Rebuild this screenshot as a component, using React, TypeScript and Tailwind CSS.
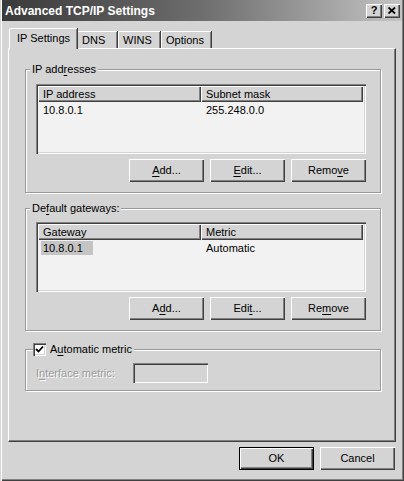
import React from 'react';

const raised = 'shadow-[inset_1px_1px_0_#ffffff,inset_-1px_-1px_0_#404040,inset_-2px_-2px_0_#808080]';
const sunken = 'shadow-[inset_1px_1px_0_#808080,inset_2px_2px_0_#404040,inset_-1px_-1px_0_#ffffff,inset_-2px_-2px_0_#d4d4d4]';

const U: React.FC<{ children: React.ReactNode }> = ({ children }) => (
  <span className="underline underline-offset-[2px] decoration-[1px]">{children}</span>
);

const Btn: React.FC<{ children: React.ReactNode; isDefault?: boolean }> = ({ children, isDefault }) => (
  <div
    className={
      isDefault
        ? 'w-[75px] h-[23px] flex items-center justify-center bg-[#d4d4d4] text-black border border-black shadow-[inset_1px_1px_0_#ffffff,inset_-1px_-1px_0_#404040,inset_-2px_-2px_0_#808080]'
        : 'w-[75px] h-[23px] flex items-center justify-center bg-[#d4d4d4] text-black shadow-[inset_1px_1px_0_#ffffff,inset_-1px_-1px_0_#404040,inset_-2px_-2px_0_#808080]'
    }
  >
    {children}
  </div>
);

type ListProps = {
  cols: [string, string];
  row: [string, string];
  selected?: boolean;
};

const ListView: React.FC<ListProps> = ({ cols, row, selected }) => (
  <div className={`w-[330px] h-[70px] bg-[#f2f2f2] p-[2px] ${sunken}`}>
    <div className="flex h-[16px]">
      <div className={`w-[163px] h-full bg-[#d4d4d4] pl-[5px] flex items-center ${raised}`}>{cols[0]}</div>
      <div className={`w-[162px] h-full bg-[#d4d4d4] pl-[5px] flex items-center ${raised}`}>{cols[1]}</div>
    </div>
    <div className="flex h-[15px] mt-px items-center">
      <div className="w-[163px] pl-[3px]">
        <span className={selected ? 'bg-[#c4c4c4] px-[2px] pr-[10px] py-px' : 'px-[2px]'}>{row[0]}</span>
      </div>
      <div className="pl-[5px]">{row[1]}</div>
    </div>
  </div>
);

const groupBox =
  'w-[356px] border border-[#9a9a9a] shadow-[inset_1px_1px_0_#ffffff,1px_1px_0_#ffffff] pb-[10px]';

export default function App() {
  return (
    <div className="w-[404px] h-[481px] bg-[#d4d4d4] text-[11px] leading-[13px] text-black font-['Liberation_Sans',Arial,sans-serif] flex flex-col shadow-[inset_1px_0_0_#d4d4d4,inset_2px_0_0_#ffffff,inset_-1px_-1px_0_#404040,inset_-2px_-2px_0_#808080] overflow-hidden">
      {/* Title bar */}
      <div className="mx-[2px] h-[21px] flex items-center justify-between bg-gradient-to-r from-[#3a3a3a] via-[#6e6e6e] to-[#c4c4c4]">
        <span className="pl-[3px] pt-[2px] text-white font-bold text-[12px]">Advanced TCP/IP Settings</span>
        <div className="flex gap-[2px] mr-[2px]">
          <div className={`w-[16px] h-[14px] bg-[#d4d4d4] flex items-center justify-center font-bold text-[11px] ${raised}`}>?</div>
          <div className={`w-[16px] h-[14px] bg-[#d4d4d4] flex items-center justify-center ${raised}`}>
            <svg width="8" height="7" viewBox="0 0 8 7">
              <path d="M0.5 0.5 L7 6.5 M7 0.5 L0.5 6.5" stroke="#000" strokeWidth="1.8" />
            </svg>
          </div>
        </div>
      </div>

      {/* Tabs */}
      <div className="flex items-end h-[20px] mt-[7px] ml-[9px]">
        <div className="relative z-10 w-[68px] h-[21px] -mb-px bg-[#d4d4d4] border-l border-t border-white rounded-tl-[2px] shadow-[inset_-1px_0_0_#808080,1px_0_0_#404040] flex items-center justify-center pb-[2px]">
          IP Settings
        </div>
        <div className="w-[40px] h-[17px] border-t border-l border-white rounded-tl-[2px] shadow-[inset_-1px_0_0_#808080,1px_0_0_#404040] pl-[4px] flex items-center">DNS</div>
        <div className="w-[42px] h-[17px] ml-px border-t border-l border-white rounded-tl-[2px] shadow-[inset_-1px_0_0_#808080,1px_0_0_#404040] pl-[4px] flex items-center">WINS</div>
        <div className="w-[50px] h-[17px] ml-px border-t border-l border-white rounded-tl-[2px] shadow-[inset_-1px_0_0_#808080,1px_0_0_#404040] pl-[4px] flex items-center">Options</div>
      </div>

      {/* Tab panel */}
      <div className="ml-[8px] w-[388px] h-[394px] border-t border-l border-white border-r border-b border-r-[#404040] border-b-[#404040] shadow-[inset_-1px_-1px_0_#808080] pt-[14px] pl-[16px]">
        <fieldset className={groupBox}>
          <legend className="ml-[4px] px-[2px] bg-[#d4d4d4]">
            IP add<U>r</U>esses
          </legend>
          <div className="w-[330px] ml-[10px] mt-[8px]">
            <ListView cols={['IP address', 'Subnet mask']} row={['10.8.0.1', '255.248.0.0']} />
            <div className="flex justify-end gap-[6px] mt-[5px]">
              <Btn><U>A</U>dd...</Btn>
              <Btn><U>E</U>dit...</Btn>
              <Btn>Remo<U>v</U>e</Btn>
            </div>
          </div>
        </fieldset>

        <fieldset className={`${groupBox} mt-[9px]`}>
          <legend className="ml-[4px] px-[2px] bg-[#d4d4d4]">
            De<U>f</U>ault gateways:
          </legend>
          <div className="w-[330px] ml-[10px] mt-[7px]">
            <ListView cols={['Gateway', 'Metric']} row={['10.8.0.1', 'Automatic']} selected />
            <div className="flex justify-end gap-[6px] mt-[5px]">
              <Btn>A<U>d</U>d...</Btn>
              <Btn>Edi<U>t</U>...</Btn>
              <Btn>Re<U>m</U>ove</Btn>
            </div>
          </div>
        </fieldset>

        <fieldset className="w-[356px] mt-[12px] border border-[#9a9a9a] shadow-[inset_1px_1px_0_#ffffff,1px_1px_0_#ffffff] pb-[7px]">
          <legend className="ml-[7px] pr-[2px] bg-[#d4d4d4] flex items-center gap-[4px]">
            <span className={`w-[13px] h-[13px] bg-white flex items-center justify-center ${sunken}`}>
              <svg width="9" height="9" viewBox="0 0 9 9">
                <path d="M1 4 L3.5 6.5 L8 1.5" stroke="#000" strokeWidth="1.8" fill="none" />
              </svg>
            </span>
            <span>A<U>u</U>tomatic metric</span>
          </legend>
          <div className="flex items-center mt-[7px] ml-[10px]">
            <span className="w-[97px] text-[#9a9a9a] [text-shadow:1px_1px_0_#ffffff]">
              I<U>n</U>terface metric:
            </span>
            <div className={`w-[75px] h-[20px] bg-[#d4d4d4] ${sunken}`} />
          </div>
        </fieldset>
      </div>

      {/* Dialog buttons */}
      <div className="flex justify-end gap-[6px] mt-[5px] pr-[9px]">
        <Btn isDefault>OK</Btn>
        <Btn>Cancel</Btn>
      </div>
    </div>
  );
}
